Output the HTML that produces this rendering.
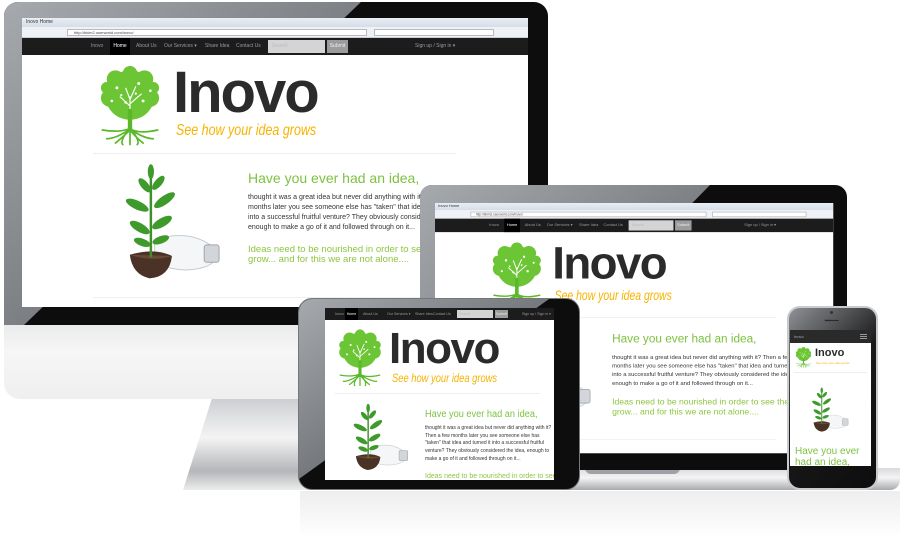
<!DOCTYPE html>
<html><head><meta charset="utf-8">
<style>
*{margin:0;padding:0;box-sizing:border-box}
body{width:900px;height:537px;background:#fff;position:relative;overflow:hidden;font-family:"Liberation Sans",Arial,sans-serif}
.a{position:absolute}
.site{position:absolute;width:506px;background:#fff;overflow:hidden;transform-origin:0 0}
.tb{left:0;top:0;width:506px;height:9px;background:linear-gradient(#e9eef4,#d5dde7);font-size:5px;color:#333;padding-left:4px;line-height:9px}
.ab{left:0;top:9px;width:506px;height:11px;background:#eef1f5;border-bottom:1px solid #c9ced6}
.url{left:45px;top:2px;width:300px;height:7px;background:#fff;border:1px solid #bbb;font-size:4px;color:#444;line-height:6px;padding-left:6px}
.nav{left:0;top:20px;width:506px;height:17px;background:#1c1c1c;font-size:5px;color:#9a9a9a;line-height:17px}
.nav span{position:absolute;top:0}
.g{color:#7dc242}
</style></head><body>
<svg width="0" height="0" style="position:absolute">
<defs>
<symbol id="tree" viewBox="0 0 100 110">
<g fill="#6cc534">
<circle cx="50" cy="40" r="34"/>
<circle cx="22" cy="44" r="12"/><circle cx="78" cy="44" r="12"/><circle cx="30" cy="18" r="12"/><circle cx="70" cy="18" r="12"/><circle cx="50" cy="10" r="10"/><circle cx="18" cy="30" r="8"/><circle cx="82" cy="30" r="8"/>
</g>
<g fill="#fff">
<circle cx="32" cy="30" r="2"/><circle cx="62" cy="24" r="2"/><circle cx="44" cy="50" r="1.8"/><circle cx="68" cy="48" r="2"/><circle cx="25" cy="48" r="1.8"/><circle cx="78" cy="34" r="1.8"/><circle cx="38" cy="40" r="1.5"/><circle cx="58" cy="38" r="1.5"/>
</g>
<g stroke="#fff" stroke-width="1.6" fill="none"><path d="M50 60 L50 42 M50 55 L36 42 M50 52 L66 38 M50 46 L44 30 M50 46 L58 28"/></g>
<g stroke="#5bb82a" stroke-width="6" fill="none" stroke-linecap="round">
<path d="M50 62 L50 86"/>
</g>
<g stroke="#5bb82a" stroke-width="2.4" fill="none" stroke-linecap="round">
<path d="M50 86 Q35 92 12 88 M50 86 Q62 94 88 88 M50 88 Q40 98 30 106 M50 88 Q58 98 68 106 M50 88 L50 108 M48 88 Q30 100 18 100 M52 88 Q70 100 82 100 M46 90 Q36 104 40 108 M54 90 Q64 104 60 108"/>
</g>
</symbol>
<symbol id="plant" viewBox="0 0 100 100">
<path d="M40 62 Q70 52 90 70 Q92 80 80 84 Q60 90 40 80 Z" fill="#f4f6f8" stroke="#c5cbd0" stroke-width="0.8"/>
<rect x="80" y="66" width="12" height="14" rx="2" fill="#d2d5d9" stroke="#a0a6ac" stroke-width="0.8"/>
<path d="M20 74 Q40 68 54 75 Q52 92 36 93 Q22 90 20 74 Z" fill="#4a3326"/>
<path d="M20 74 Q38 80 54 75" fill="#6a4a36"/>
<path d="M37 76 L37 8" stroke="#3f8f2a" stroke-width="2" fill="none"/>
<g fill="#3f9a2c">
<ellipse cx="28" cy="52" rx="9" ry="3.5" transform="rotate(30 28 52)"/>
<ellipse cx="46" cy="48" rx="9" ry="3.5" transform="rotate(-30 46 48)"/>
<ellipse cx="26" cy="34" rx="10" ry="3.5" transform="rotate(25 26 34)"/>
<ellipse cx="48" cy="30" rx="10" ry="3.5" transform="rotate(-35 48 30)"/>
<ellipse cx="32" cy="18" rx="7" ry="3" transform="rotate(50 32 18)"/>
<ellipse cx="43" cy="16" rx="7" ry="3" transform="rotate(-50 43 16)"/>
<ellipse cx="37" cy="7" rx="2.5" ry="6"/>
<ellipse cx="30" cy="64" rx="7" ry="3" transform="rotate(20 30 64)"/>
<ellipse cx="45" cy="62" rx="7" ry="3" transform="rotate(-20 45 62)"/>
</g>
</symbol>
</defs></svg>

<!-- reflection -->
<div class="a" style="left:300px;top:491px;width:600px;height:46px;background:linear-gradient(#eeeeef,#fff)"></div>

<!-- Monitor stand -->
<svg class="a" style="left:150px;top:390px" width="200" height="105"><defs><linearGradient id="st" x1="0" y1="0" x2="0" y2="1"><stop offset="0" stop-color="#c9cbce"/><stop offset=".45" stop-color="#f4f4f5"/><stop offset=".8" stop-color="#b4b6b9"/><stop offset="1" stop-color="#eceded"/></linearGradient></defs><polygon points="63,5 200,5 200,100 33,100" fill="url(#st)"/></svg>
<!-- Monitor chin -->
<div class="a" style="left:4px;top:320px;width:544px;height:79px;border-radius:0 0 16px 16px;background:linear-gradient(#e8e9ea,#f6f6f7 40%,#efeff0)"></div>
<!-- Monitor bezel -->
<div class="a" style="left:4px;top:2px;width:544px;height:323px;border-radius:14px 14px 0 0;background:#0d0d0d;overflow:hidden">
<svg width="544" height="323"><defs><linearGradient id="mg" x1="0" y1="0" x2="1" y2="1"><stop offset="0" stop-color="#a6a9ad"/><stop offset="1" stop-color="#55585c"/></linearGradient></defs><polygon points="0,0 357,0 20,323 0,323" fill="url(#mg)"/></svg>
</div>

<!-- Monitor site -->
<div class="site" style="left:22px;top:18px;height:289px">
 <div class="a tb">Inovo Home</div>
 <div class="a ab"><div class="a url">http://bkim2.userworld.com/inovo/</div><div class="a" style="left:352px;top:2px;width:120px;height:7px;background:#fff;border:1px solid #bbb"></div></div>
 <div class="a nav">
  <span style="left:69px">Inovo</span>
  <span style="left:88px;width:20px;background:#000;color:#fff;text-align:center">Home</span>
  <span style="left:114px">About Us</span>
  <span style="left:142px">Our Services ▾</span>
  <span style="left:183px">Share Idea</span>
  <span style="left:214px">Contact Us</span>
  <span style="left:246px;top:2px;width:57px;height:13px;background:#d4d4d4;line-height:13px;padding-left:4px;color:#bbb">Search</span>
  <span style="left:305px;top:2px;width:21px;height:13px;background:#9c9c9c;line-height:13px;text-align:center;color:#eee">Submit</span>
  <span style="left:393px">Sign up / Sign in ▾</span>
 </div>
 <svg class="a" style="left:71px;top:48px" width="74" height="80"><use href="#tree"/></svg>
 <div class="a" style="left:151px;top:40px;font-size:58px;font-weight:bold;color:#2b2b2b;letter-spacing:-2px;line-height:70px">Inovo</div>
 <div class="a" style="left:154px;top:104px;font-size:16px;font-style:italic;color:#f6b300;transform:scaleX(.78);transform-origin:0 0;white-space:nowrap">See how your idea grows</div>
 <div class="a" style="left:71px;top:135px;width:363px;height:1px;background:#eee"></div>
 <svg class="a" style="left:83px;top:145px" width="124" height="124"><use href="#plant"/></svg>
 <div class="a g" style="left:226px;top:151px;font-size:14px;line-height:18px;white-space:nowrap">Have you ever had an idea,</div>
 <div class="a" style="left:226px;top:175px;font-size:7px;line-height:10px;color:#333;white-space:nowrap">thought it was a great idea but never did anything with it? Then a few<br>months later you see someone else has "taken" that idea and turned it<br>into a successful fruitful venture? They obviously considered the idea,<br>enough to make a go of it and followed through on it...</div>
 <div class="a" style="left:226px;top:227px;font-size:9.5px;line-height:10px;color:#8dc63f;white-space:nowrap">Ideas need to be nourished in order to see them<br>grow... and for this we are not alone....</div>
 <div class="a" style="left:71px;top:279px;width:363px;height:1px;background:#f0f0f0"></div>
</div>

<!-- Laptop base -->
<div class="a" style="left:412px;top:468px;width:488px;height:22px;border-radius:4px 0 10px 10px;background:linear-gradient(#d9dadc,#f4f4f5 45%,#a8aaad)"></div>
<div class="a" style="left:585px;top:468px;width:95px;height:6px;border-radius:0 0 6px 6px;background:#9fa1a4"></div>
<!-- Laptop lid -->
<div class="a" style="left:420px;top:185px;width:427px;height:285px;border-radius:12px 12px 0 0;background:#0d0d0d;overflow:hidden">
<svg width="427" height="285"><defs><linearGradient id="lg" x1="0" y1="0" x2="1" y2="1"><stop offset="0" stop-color="#a6a9ad"/><stop offset="1" stop-color="#55585c"/></linearGradient></defs><polygon points="0,0 290,0 10,285 0,285" fill="url(#lg)"/></svg>
</div>
<div class="site" style="left:435px;top:203px;height:318px;transform:scale(.787)">
 <div class="a tb">Inovo Home</div>
 <div class="a ab"><div class="a url">http://bkim2.userworld.com/inovo/</div><div class="a" style="left:352px;top:2px;width:120px;height:7px;background:#fff;border:1px solid #bbb"></div></div>
 <div class="a nav">
  <span style="left:69px">Inovo</span>
  <span style="left:88px;width:20px;background:#000;color:#fff;text-align:center">Home</span>
  <span style="left:114px">About Us</span>
  <span style="left:142px">Our Services ▾</span>
  <span style="left:183px">Share Idea</span>
  <span style="left:214px">Contact Us</span>
  <span style="left:246px;top:2px;width:57px;height:13px;background:#d4d4d4;line-height:13px;padding-left:4px;color:#bbb">Search</span>
  <span style="left:305px;top:2px;width:21px;height:13px;background:#9c9c9c;line-height:13px;text-align:center;color:#eee">Submit</span>
  <span style="left:393px">Sign up / Sign in ▾</span>
 </div>
 <svg class="a" style="left:65px;top:50px" width="78" height="84"><use href="#tree"/></svg>
 <div class="a" style="left:149px;top:42px;font-size:58px;font-weight:bold;color:#2b2b2b;letter-spacing:-2px;line-height:70px">Inovo</div>
 <div class="a" style="left:152px;top:108px;font-size:17px;font-style:italic;color:#f6b300;transform:scaleX(.78);transform-origin:0 0;white-space:nowrap">See how your idea grows</div>
 <div class="a" style="left:71px;top:145px;width:363px;height:1px;background:#eee"></div>
 <svg class="a" style="left:83px;top:155px" width="124" height="124"><use href="#plant"/></svg>
 <div class="a g" style="left:225px;top:164px;font-size:15px;line-height:18px;white-space:nowrap">Have you ever had an idea,</div>
 <div class="a" style="left:225px;top:190px;font-size:7.5px;line-height:11px;color:#333;white-space:nowrap">thought it was a great idea but never did anything with it? Then a few<br>months later you see someone else has "taken" that idea and turned it<br>into a successful fruitful venture? They obviously considered the idea,<br>enough to make a go of it and followed through on it...</div>
 <div class="a" style="left:225px;top:247px;font-size:11px;line-height:12.5px;color:#8dc63f;white-space:nowrap">Ideas need to be nourished in order to see them<br>grow... and for this we are not alone....</div>
 <div class="a" style="left:71px;top:300px;width:363px;height:1px;background:#f0f0f0"></div>
</div>

<!-- Tablet -->
<div class="a" style="left:298px;top:298px;width:282px;height:192px;border-radius:14px;background:#0d0d0d;overflow:hidden;border:1px solid #777">
<svg width="282" height="192"><defs><linearGradient id="tg" x1="0" y1="0" x2="1" y2="1"><stop offset="0" stop-color="#a6a9ad"/><stop offset="1" stop-color="#45484c"/></linearGradient></defs><polygon points="0,0 250,0 0,180" fill="url(#tg)"/></svg>
</div>
<div class="a" style="left:325px;top:308px;width:229px;height:172px;background:#fff;overflow:hidden">
 <div class="a" style="left:0;top:0;width:229px;height:12px;background:#1c1c1c;font-size:3.6px;color:#9a9a9a;line-height:12px">
  <span class="a" style="left:10px">Inovo</span>
  <span class="a" style="left:20px;width:13px;background:#000;color:#fff;text-align:center">Home</span>
  <span class="a" style="left:38px">About Us</span>
  <span class="a" style="left:62px">Our Services ▾</span>
  <span class="a" style="left:90px">Share Idea</span>
  <span class="a" style="left:108px">Contact Us</span>
  <span class="a" style="left:132px;top:2px;width:36px;height:8px;background:#d4d4d4;line-height:8px;padding-left:2px;color:#bbb">Search</span>
  <span class="a" style="left:170px;top:2px;width:13px;height:8px;background:#9c9c9c;line-height:8px;text-align:center;color:#eee">Submit</span>
  <span class="a" style="left:197px">Sign up / Sign in ▾</span>
 </div>
 <svg class="a" style="left:9px;top:20px" width="52" height="60"><use href="#tree"/></svg>
 <div class="a" style="left:64px;top:19px;font-size:44px;font-weight:bold;color:#2b2b2b;letter-spacing:-1.5px;line-height:44px">Inovo</div>
 <div class="a" style="left:67px;top:63px;font-size:12px;font-style:italic;color:#f6b300;transform:scaleX(.78);transform-origin:0 0;white-space:nowrap">See how your idea grows</div>
 <div class="a" style="left:10px;top:85px;width:205px;height:1px;background:#eee"></div>
 <svg class="a" style="left:15px;top:95px" width="75" height="72"><use href="#plant"/></svg>
 <div class="a g" style="left:100px;top:100px;font-size:10px;line-height:14px;white-space:nowrap;transform:scaleX(.92);transform-origin:0 0">Have you ever had an idea,</div>
 <div class="a" style="left:100px;top:117px;font-size:5px;line-height:7.7px;color:#333;white-space:nowrap">thought it was a great idea but never did anything with it?<br>Then a few months later you see someone else has<br>"taken" that idea and turned it into a successful fruitful<br>venture? They obviously considered the idea, enough to<br>make a go of it and followed through on it...</div>
 <div class="a" style="left:100px;top:164px;font-size:7px;line-height:9px;color:#8dc63f;white-space:nowrap">Ideas need to be nourished in order to see</div>
</div>

<!-- Phone -->
<div class="a" style="left:787px;top:306px;width:91px;height:184px;border-radius:13px;background:linear-gradient(135deg,#8e9196,#1a1a1a 45%,#0d0d0d);border:2px solid #c8cacd"></div>
<div class="a" style="left:830px;top:311px;width:3px;height:3px;border-radius:50%;background:#333"></div>
<div class="a" style="left:824px;top:319px;width:16px;height:3px;border-radius:2px;background:#2a2a2a;border:1px solid #555"></div>
<div class="a" style="left:790px;top:330px;width:81px;height:136px;background:#fff;overflow:hidden">
 <div class="a" style="left:0;top:0;width:81px;height:13px;background:#2a2a2a;font-size:4px;color:#aaa;line-height:13px;padding-left:4px">Inovo</div>
 <div class="a" style="left:70px;top:4px;width:7px;height:5px;border-top:1px solid #999;border-bottom:1px solid #999"></div>
 <div class="a" style="left:70px;top:6px;width:7px;height:1px;background:#999"></div>
 <svg class="a" style="left:4px;top:17px" width="19" height="21"><use href="#tree"/></svg>
 <div class="a" style="left:25px;top:17px;font-size:11px;font-weight:bold;color:#2b2b2b;line-height:12px">Inovo</div>
 <div class="a" style="left:26px;top:31px;font-size:3px;color:#f6b300;white-space:nowrap">See how your idea grows</div>
 <div class="a" style="left:4px;top:42px;width:73px;height:1px;background:#eee"></div>
 <svg class="a" style="left:14px;top:50px" width="48" height="62"><use href="#plant"/></svg>
 <div class="a g" style="left:5px;top:116px;font-size:10px;line-height:11px;white-space:nowrap">Have you ever<br>had an idea,</div>
</div>
</body></html>
